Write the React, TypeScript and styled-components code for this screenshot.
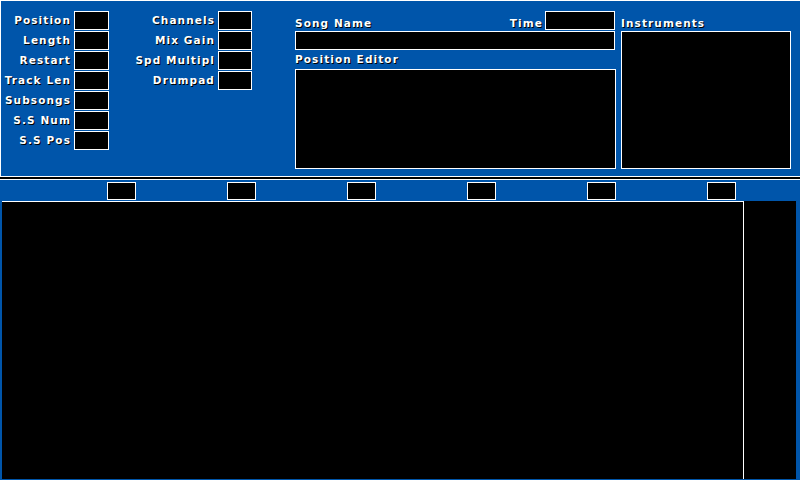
import styled, { createGlobalStyle } from "styled-components";

const GlobalStyle = createGlobalStyle`
  html, body {
    margin: 0;
    padding: 0;
    background: #000000;
    overflow: hidden;
  }
  * {
    box-sizing: border-box;
  }
`;

const leftFields = [
  "Position",
  "Length",
  "Restart",
  "Track Len",
  "Subsongs",
  "S.S Num",
  "S.S Pos",
];

const rightFields = ["Channels", "Mix Gain", "Spd Multipl", "Drumpad"];

const trackSlots = [0, 1, 2, 3, 4, 5];

const App = (): JSX.Element => {
  return (
    <Screen>
      <GlobalStyle />
      <TopPanel>
        <FieldColumn $labelWidth={70} $boxWidth={35}>
          {leftFields.map((name) => (
            <FieldRow key={name}>
              <Label>{name}</Label>
              <ValueBox />
            </FieldRow>
          ))}
        </FieldColumn>
        <FieldColumn $labelWidth={106} $boxWidth={34}>
          {rightFields.map((name) => (
            <FieldRow key={name}>
              <Label>{name}</Label>
              <ValueBox />
            </FieldRow>
          ))}
        </FieldColumn>
        <SongSection>
          <SongHeader>
            <HeaderLabel>Song Name</HeaderLabel>
            <TimeGroup>
              <HeaderLabel>Time</HeaderLabel>
              <TimeBox />
            </TimeGroup>
          </SongHeader>
          <SongNameBox />
          <SectionLabel>Position Editor</SectionLabel>
          <PositionEditor />
        </SongSection>
        <InstrumentSection>
          <HeaderLabel>Instruments</HeaderLabel>
          <InstrumentList />
        </InstrumentSection>
      </TopPanel>
      <TrackBar>
        {trackSlots.map((slot) => (
          <TrackSlot key={slot}>
            <TrackBox />
          </TrackSlot>
        ))}
      </TrackBar>
      <PatternArea>
        <PatternView />
        <ScrollColumn />
      </PatternArea>
    </Screen>
  );
};

const Screen = styled.div`
  width: 800px;
  height: 480px;
  display: flex;
  flex-direction: column;
  background: #000000;
  font-family: "DejaVu Sans", "Liberation Sans", sans-serif;
`;

const TopPanel = styled.div`
  height: 177px;
  display: flex;
  background: #0055aa;
  border-top: 1px solid #ffffff;
  border-left: 1px solid #ffffff;
  border-bottom: 1px solid #ffffff;
  margin-bottom: 2px;
`;

const FieldColumn = styled.div<{ $labelWidth: number; $boxWidth: number }>`
  display: grid;
  grid-template-columns: ${(p) => p.$labelWidth}px ${(p) => p.$boxWidth}px;
  grid-auto-rows: 19px;
  column-gap: 3px;
  row-gap: 1px;
  align-content: start;
  padding-top: 10px;
  flex-shrink: 0;
`;

const FieldRow = styled.div`
  display: contents;
`;

const Label = styled.span`
  display: block;
  height: 19px;
  color: #ffffff;
  font-size: 10.5px;
  font-weight: 700;
  letter-spacing: 1.1px;
  line-height: 19px;
  white-space: nowrap;
  text-align: right;
  text-shadow: 1px 1px 0 #000000;
`;

const HeaderLabel = styled(Label)`
  text-align: left;
  padding-top: 4px;
  line-height: 17px;
`;

const SectionLabel = styled(Label)`
  text-align: left;
  padding-top: 1px;
  line-height: 17px;
`;

const ValueBox = styled.div`
  height: 19px;
  background: #000000;
  border: 1px solid #ffffff;
`;

const SongSection = styled.div`
  width: 321px;
  margin-left: 43px;
  display: flex;
  flex-direction: column;
  padding-top: 10px;
  flex-shrink: 0;
`;

const SongHeader = styled.div`
  display: flex;
  justify-content: space-between;
  align-items: flex-end;
  height: 19px;
  padding-right: 1px;
`;

const TimeGroup = styled.div`
  display: flex;
  align-items: flex-end;
  gap: 2px;
`;

const TimeBox = styled.div`
  width: 70px;
  height: 19px;
  background: #000000;
  border: 1px solid #ffffff;
`;

const SongNameBox = styled.div`
  width: 320px;
  height: 19px;
  margin-top: 1px;
  background: #000000;
  border: 1px solid #ffffff;
`;

const PositionEditor = styled.div`
  width: 321px;
  height: 100px;
  background: #000000;
  border: 1px solid #ffffff;
`;

const InstrumentSection = styled.div`
  width: 170px;
  margin-left: 5px;
  display: flex;
  flex-direction: column;
  padding-top: 10px;
  flex-shrink: 0;
`;

const InstrumentList = styled.div`
  height: 138px;
  margin-top: 1px;
  background: #000000;
  border: 1px solid #ffffff;
`;

const TrackBar = styled.div`
  height: 22px;
  display: flex;
  background: #0055aa;
  border-top: 1px solid #ffffff;
  padding-left: 107px;
  padding-top: 2px;
  overflow: hidden;
`;

const TrackSlot = styled.div`
  width: 120px;
  flex-shrink: 0;
`;

const TrackBox = styled.div`
  width: 29px;
  height: 18px;
  background: #000000;
  border: 1px solid #ffffff;
`;

const PatternArea = styled.div`
  flex: 1;
  display: flex;
  background: #0055aa;
  padding: 0 4px 1px 2px;
`;

const PatternView = styled.div`
  width: 742px;
  background: #000000;
  border-top: 1px solid #ffffff;
  border-right: 1px solid #ffffff;
`;

const ScrollColumn = styled.div`
  flex: 1;
  background: #000000;
`;

export default App;
